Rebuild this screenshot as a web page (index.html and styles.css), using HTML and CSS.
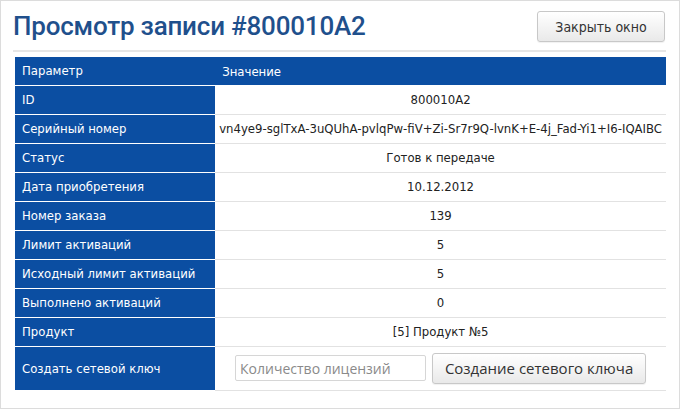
FILE: index.html
```html
<!DOCTYPE html>
<html lang="ru">
<head>
<meta charset="utf-8">
<title>Просмотр записи</title>
<link rel="stylesheet" href="styles.css">
</head>
<body>
<div class="frame">
  <div class="topbar">
    <h1 class="title">Просмотр записи #800010A2</h1>
    <button class="btn btn-close" type="button">Закрыть окно</button>
  </div>
  <table class="grid">
    <thead>
      <tr><th class="lbl">Параметр</th><th class="val-h">Значение</th></tr>
    </thead>
    <tbody>
      <tr><td class="lbl">ID</td><td class="val">800010A2</td></tr>
      <tr><td class="lbl">Серийный номер</td><td class="val">vn4ye9-sglTxA-3uQUhA-pvlqPw-fiV+Zi-Sr7r9Q-lvnK+E-4j_Fad-Yi1+I6-IQAIBC</td></tr>
      <tr><td class="lbl">Статус</td><td class="val">Готов к передаче</td></tr>
      <tr><td class="lbl">Дата приобретения</td><td class="val">10.12.2012</td></tr>
      <tr><td class="lbl">Номер заказа</td><td class="val">139</td></tr>
      <tr><td class="lbl">Лимит активаций</td><td class="val">5</td></tr>
      <tr><td class="lbl">Исходный лимит активаций</td><td class="val">5</td></tr>
      <tr><td class="lbl">Выполнено активаций</td><td class="val">0</td></tr>
      <tr><td class="lbl">Продукт</td><td class="val">[5] Продукт №5</td></tr>
      <tr class="row-form">
        <td class="lbl">Создать сетевой ключ</td>
        <td class="val">
          <div class="form">
            <input class="input" type="text" placeholder="Количество лицензий">
            <button class="btn btn-create" type="button">Создание сетевого ключа</button>
          </div>
        </td>
      </tr>
    </tbody>
  </table>
</div>
</body>
</html>
```
FILE: styles.css
```css
* { box-sizing: border-box; }
html, body { margin: 0; padding: 0; background: #fff; }
body { font-family: "DejaVu Sans Condensed", "Liberation Sans", sans-serif; }

.frame {
  width: 680px;
  height: 409px;
  border: 1px solid #dcdcdc;
  padding: 0 14px 0 14px;
}

.topbar {
  display: flex;
  justify-content: space-between;
  align-items: center;
  height: 51px;
  padding: 0 1px 0 0;
  border-bottom: 2px solid #e6e6e6;
  margin: 0 -1px 0 -2px;
}

.title {
  margin: 0;
  font-family: Roboto, "DejaVu Sans Condensed", sans-serif;
  font-weight: 500;
  font-size: 26px;
  color: #1f508c;
  letter-spacing: -0.2px;
}

.btn {
  font-family: "Open Sans", "DejaVu Sans", sans-serif;
  color: #333;
  background: linear-gradient(#ffffff, #e9e9e9);
  border: 1px solid #c8c8c8;
  border-radius: 3px;
  box-shadow: 0 1px 1px rgba(0,0,0,0.06);
}

.btn-close {
  width: 128px;
  height: 31px;
  font-size: 14px;
  font-family: "DejaVu Sans Condensed", sans-serif;
  margin-top: 2px;
}

.grid {
  margin-top: 5px;
  width: 651px;
  border-collapse: collapse;
  font-size: 13px;
}

.grid th, .grid td {
  height: 29px;
  padding: 0 7px;
  font-weight: normal;
}

.grid thead th {
  height: 28px;
  background: #0b4ea2;
  color: #fff;
  text-align: left;
}

.lbl {
  width: 201px;
  background: #0b4ea2;
  color: #fff;
  text-align: left;
  border-bottom: 1px solid #fff;
}

.grid td.val {
  text-align: center;
  color: #222;
  border-bottom: 1px solid #e2e2e2;
  white-space: nowrap;
  padding: 0 4px;
}

.row-form td { height: 44px; }
.row-form td.lbl { border-bottom: none; }

.form {
  display: flex;
  justify-content: center;
  align-items: center;
  gap: 6px;
}

.input {
  width: 191px;
  height: 26px;
  border: 1px solid #d6d6d6;
  border-radius: 2px;
  padding: 0 4px;
  font-family: "Open Sans", "DejaVu Sans", sans-serif;
  font-size: 14px;
  color: #333;
}
.input::placeholder { color: #8a8a8a; }

.btn-create {
  width: 214px;
  height: 31px;
  font-size: 15px;
}
```
